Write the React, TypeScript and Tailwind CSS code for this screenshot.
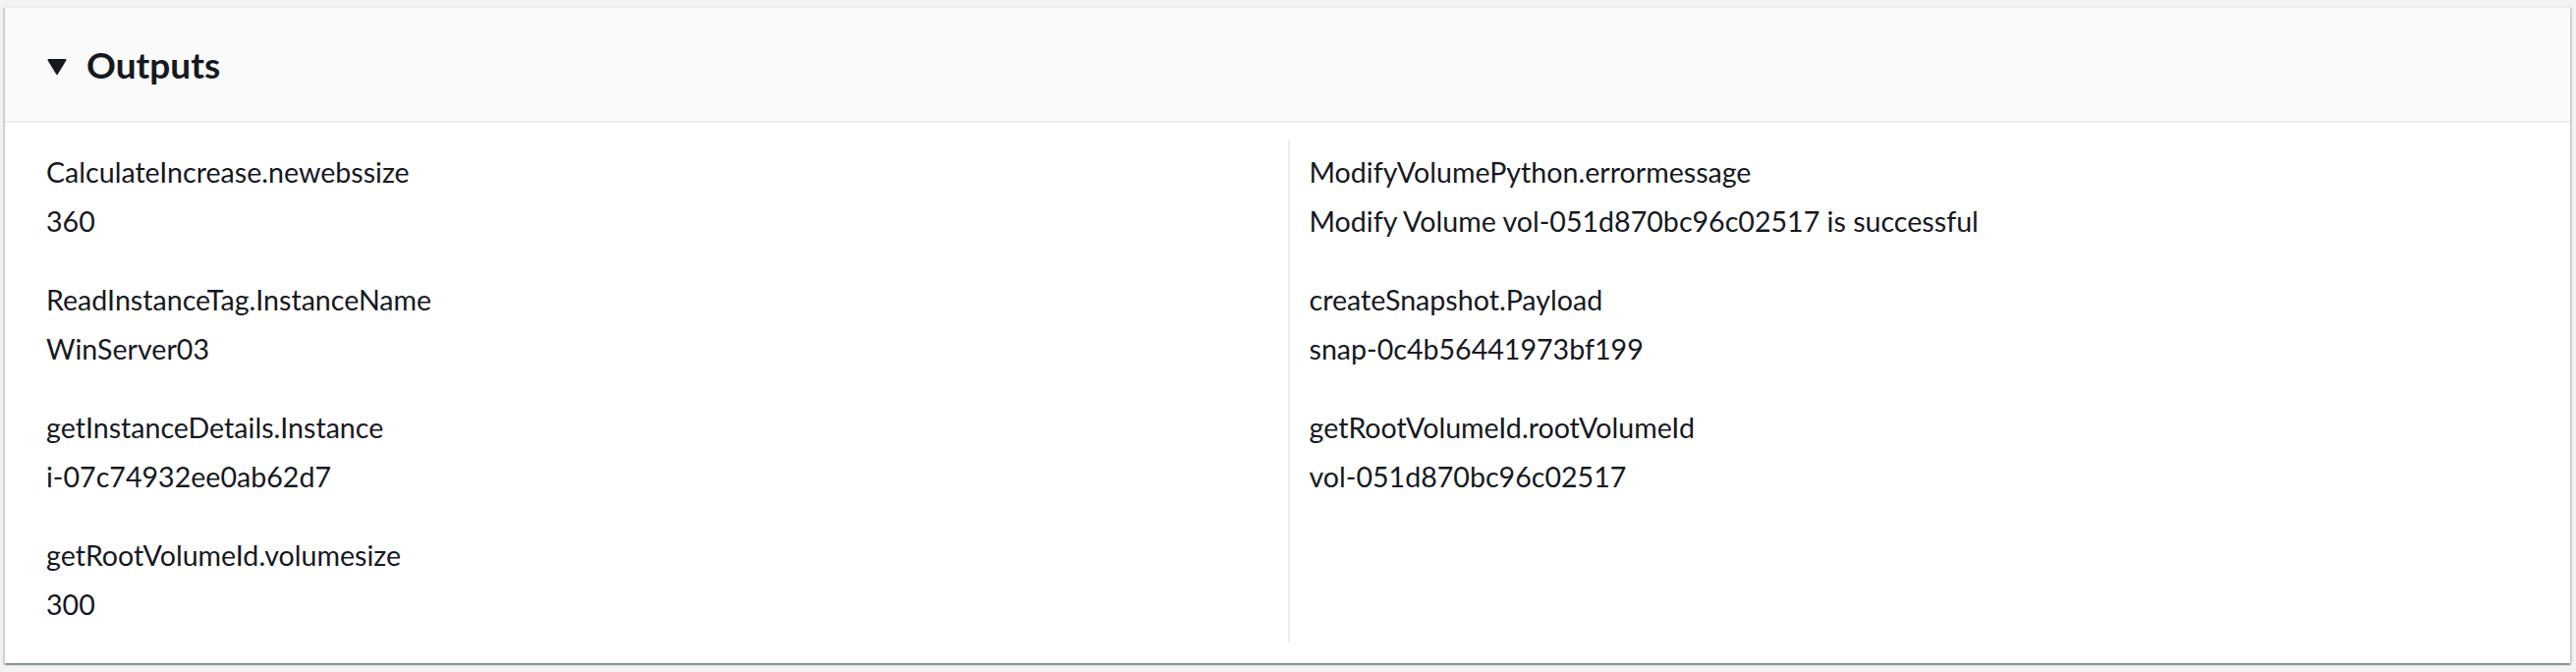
import React from "react";

const leftItems = [
    { label: "CalculateIncrease.newebssize", value: "360" },
    { label: "ReadInstanceTag.InstanceName", value: "WinServer03" },
    { label: "getInstanceDetails.Instance", value: "i-07c74932ee0ab62d7" },
    { label: "getRootVolumeId.volumesize", value: "300" },
];

const rightItems = [
    {
        label: "ModifyVolumePython.errormessage",
        value: "Modify Volume vol-051d870bc96c02517 is successful",
    },
    { label: "createSnapshot.Payload", value: "snap-0c4b56441973bf199" },
    { label: "getRootVolumeId.rootVolumeId", value: "vol-051d870bc96c02517" },
];

const OutputItem: React.FC<{ label: string; value: string }> = ({ label, value }) => (
    <div className="flex flex-col gap-[10px]">
        <div className="leading-[40px]">{label}</div>
        <div className="leading-[40px]">{value}</div>
    </div>
);

const App: React.FC = () => {
    return (
        <div
            className="min-h-screen w-full bg-[#f2f3f3] pt-[7px] pl-[5px] pr-[6px] text-[#16191f]"
            style={{ fontFamily: "Lato, 'Liberation Sans', sans-serif" }}
        >
            <div className="bg-white shadow-[0_2px_1px_0_rgba(0,28,36,0.35),2px_1px_2px_0_rgba(0,28,36,0.15),-2px_1px_2px_0_rgba(0,28,36,0.15)] border-t border-[#eaeded]">
                <div className="h-[117px] bg-[#fafafa] border-b-2 border-[#eaeded] flex items-center pl-[43px] gap-[20px]">
                    <svg width="20" height="16" viewBox="0 0 20 16" className="mt-[4px]">
                        <path d="M1.5 1 H18.5 L10 15 Z" fill="#16191f" stroke="#16191f" strokeWidth="2" strokeLinejoin="round" />
                    </svg>
                    <h2 className="text-[37px] font-bold leading-none">Outputs</h2>
                </div>
                <div className="grid grid-cols-2 px-[42px] pt-[18px] pb-[21px] text-[28.6px]">
                    <div className="flex flex-col gap-[40px] pt-[12px] pb-[19px]">
                        {leftItems.map((item, idx) => (
                            <OutputItem key={idx} {...item} />
                        ))}
                    </div>
                    <div className="flex flex-col gap-[40px] pt-[12px] pb-[19px] border-l-2 border-[#eaeded] pl-[20px]">
                        {rightItems.map((item, idx) => (
                            <OutputItem key={idx} {...item} />
                        ))}
                    </div>
                </div>
            </div>
        </div>
    );
};

export default App;
